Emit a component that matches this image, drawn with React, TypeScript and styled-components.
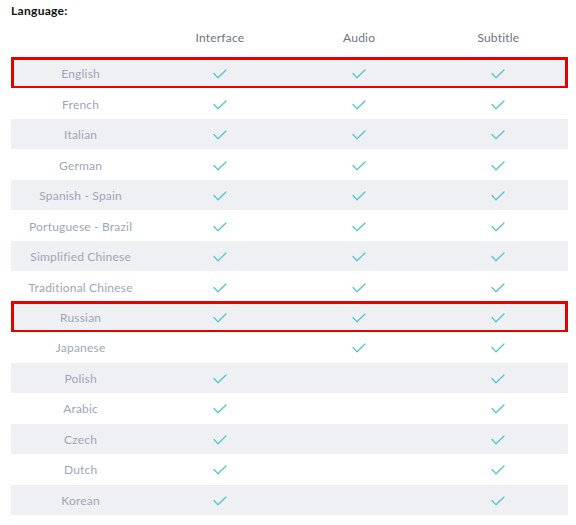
import React from "react";
import styled, { createGlobalStyle } from "styled-components";

const Global = createGlobalStyle`
  html, body { margin: 0; padding: 0; background: #ffffff; }
  body { font-family: "Lato", "Noto Sans", sans-serif; }
`;

const Page = styled.div`
  width: 576px;
  padding: 3px 8px 0 11px;
  box-sizing: border-box;
`;

const Title = styled.div`
  font-size: 12px;
  line-height: 16px;
  font-weight: 700;
  color: #111111;
  letter-spacing: 0.3px;
`;

const Table = styled.div`
  margin-top: 3px;
  display: flex;
  flex-direction: column;
`;

const HeaderRow = styled.div`
  display: grid;
  grid-template-columns: repeat(4, 1fr);
  height: 30px;
  margin-bottom: 6px;
  align-items: center;
`;

const HeaderCell = styled.div`
  text-align: center;
  font-size: 12px;
  letter-spacing: 0.2px;
  color: #6f7380;
`;

const Row = styled.div<{ $striped: boolean; $highlight: boolean }>`
  position: relative;
  display: grid;
  grid-template-columns: repeat(4, 1fr);
  height: 30.47px;
  align-items: center;
  background: ${(p) => (p.$striped ? "#eef0f4" : "#ffffff")};
  &::after {
    content: "";
    display: ${(p) => (p.$highlight ? "block" : "none")};
    position: absolute;
    left: 0;
    right: 0;
    top: -1px;
    bottom: -1px;
    border: 3px solid #e60000;
    pointer-events: none;
  }
`;

const LangCell = styled.div`
  text-align: center;
  font-size: 12px;
  letter-spacing: 0.2px;
  color: #a0a5b7;
  white-space: nowrap;
  padding-top: 1px;
`;

const MarkCell = styled.div`
  display: flex;
  justify-content: center;
  align-items: center;
  padding-top: 2px;
`;

const Check = () => (
  <svg width="14" height="10" viewBox="0 0 14 10">
    <polyline
      points="1,4.5 5,8.8 13,1"
      fill="none"
      stroke="#4fc3cc"
      strokeWidth="1.2"
      strokeLinecap="round"
      strokeLinejoin="round"
    />
  </svg>
);

type Lang = { name: string; i: boolean; a: boolean; s: boolean; hl?: boolean };

const langs: Lang[] = [
  { name: "English", i: true, a: true, s: true, hl: true },
  { name: "French", i: true, a: true, s: true },
  { name: "Italian", i: true, a: true, s: true },
  { name: "German", i: true, a: true, s: true },
  { name: "Spanish - Spain", i: true, a: true, s: true },
  { name: "Portuguese - Brazil", i: true, a: true, s: true },
  { name: "Simplified Chinese", i: true, a: true, s: true },
  { name: "Traditional Chinese", i: true, a: true, s: true },
  { name: "Russian", i: true, a: true, s: true, hl: true },
  { name: "Japanese", i: false, a: true, s: true },
  { name: "Polish", i: true, a: false, s: true },
  { name: "Arabic", i: true, a: false, s: true },
  { name: "Czech", i: true, a: false, s: true },
  { name: "Dutch", i: true, a: false, s: true },
  { name: "Korean", i: true, a: false, s: true },
];

export default function App() {
  return (
    <>
      <Global />
      <Page>
        <Title>Language:</Title>
        <Table>
          <HeaderRow>
            <HeaderCell />
            <HeaderCell>Interface</HeaderCell>
            <HeaderCell>Audio</HeaderCell>
            <HeaderCell>Subtitle</HeaderCell>
          </HeaderRow>
          {langs.map((l, idx) => (
            <Row key={l.name} $striped={idx % 2 === 0} $highlight={!!l.hl}>
              <LangCell>{l.name}</LangCell>
              <MarkCell>{l.i && <Check />}</MarkCell>
              <MarkCell>{l.a && <Check />}</MarkCell>
              <MarkCell>{l.s && <Check />}</MarkCell>
            </Row>
          ))}
        </Table>
      </Page>
    </>
  );
}
